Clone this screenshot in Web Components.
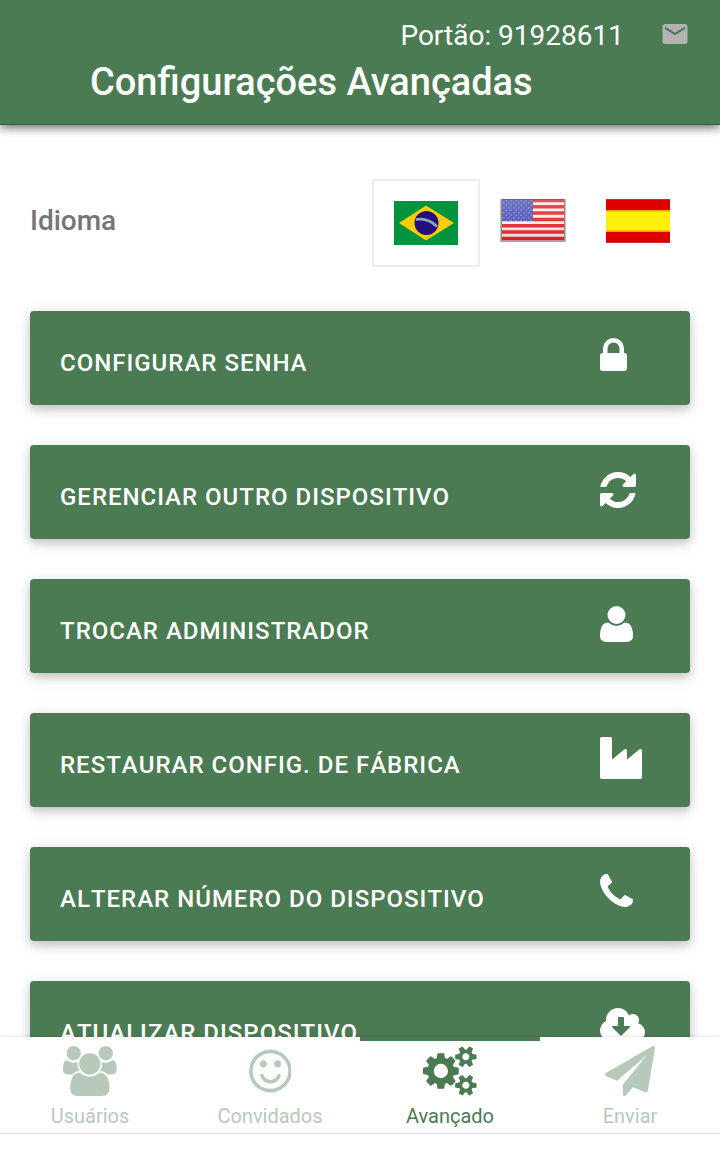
<!DOCTYPE html>
<html lang="pt-BR">
<head>
<meta charset="utf-8">
<meta name="viewport" content="width=device-width, initial-scale=1">
<title>Configurações Avançadas</title>
<style>
  :root { --green: #4a7b52; --muted: #b7caba; --grey: #757575; }
  body { margin: 0; background: #fff; font-family: Roboto, "Liberation Sans", sans-serif; }
</style>
</head>
<body>
<settings-app></settings-app>

<template id="flag-br">
  <svg width="64" height="44" viewBox="0 0 64 44" aria-hidden="true">
    <rect width="64" height="44" fill="#00943f"/>
    <path d="M5 22 32 4.500 60 22 32 39.500Z" fill="#fc0"/>
    <circle cx="32.500" cy="22" r="12" fill="#23107a"/>
    <path d="M22 18.500Q34 16.500 43 25.500" fill="none" stroke="#8fa5c4" stroke-width="2.600"/>
  </svg>
</template>
<template id="flag-us">
  <svg width="66" height="44" viewBox="0 0 66 44" aria-hidden="true">
    <defs>
      <pattern id="stars" width="5" height="5" patternUnits="userSpaceOnUse">
        <rect width="5" height="5" fill="#4b50b5"/>
        <circle cx="1.250" cy="1.250" r=".9" fill="#8084d0"/><circle cx="3.750" cy="3.750" r=".9" fill="#8084d0"/>
      </pattern>
      <linearGradient id="gloss" x2="0" y2="1">
        <stop offset="0" stop-color="#fff" stop-opacity=".2"/>
        <stop offset=".5" stop-color="#fff" stop-opacity=".08"/>
        <stop offset="1" stop-color="#400" stop-opacity=".12"/>
      </linearGradient>
      <filter id="soft"><feGaussianBlur stdDeviation=".6"/></filter>
    </defs>
    <g filter="url(#soft)">
      <rect x="0" y="0" width="66" height="43" rx="1" fill="#c4bdbd"/>
      <rect x="2" y="0" width="62" height="42" fill="#f8eeee"/>
      <path d="M2 1.500h62M2 7.800h62M2 14h62M2 20.500h62M2 26.800h62M2 33h62M2 39.500h62" stroke="#e2262a" stroke-width="3.400"/>
      <rect x="2" y="1" width="31" height="21" fill="url(#stars)"/>
      <rect x="1.500" y=".5" width="63" height="41.500" fill="url(#gloss)" stroke="#8a5a60" stroke-opacity=".55"/>
    </g>
  </svg>
</template>
<template id="flag-es">
  <svg width="64" height="44" viewBox="0 0 64 44" aria-hidden="true">
    <rect width="64" height="44" fill="#de0000"/>
    <rect y="11" width="64" height="22" fill="#f0a000"/>
    <rect y="12.500" width="64" height="19" fill="#fff00a"/>
    <path d="M0 .5h64M0 43.500h64" stroke="#c83030"/>
  </svg>
</template>

<script>
/* Glyph outlines, on a 1792-unit em with the y axis pointing up. */
const smallCog = top => `M1920 ${top}v-140q0 -16 -149 -31q-12 -27 -30 -52q51 -113 51 -138q0 -4 -4 -7q-122 -71 -124 -71q-8 0 -46 47t-52 68q-20 -2 -30 -2t-30 2q-14 -21 -52 -68t-46 -47q-2 0 -124 71q-4 3 -4 7q0 25 51 138q-18 25 -30 52q-149 15 -149 31v140q0 16 149 31q13 29 30 52q-51 113 -51 138q0 4 4 7q4 2 35 20t59 34t30 16q8 0 46 -46.5t52 -67.5q20 2 30 2t30 -2q51 71 92 112l6 2q4 0 124 -70q4 -3 4 -7q0 -25 -51 -138q17 -23 30 -52q149 -15 149 -31z`;
const ICONS = {
  lock: [1152, 'M320 768h512v192q0 106 -75 181t-181 75t-181 -75t-75 -181v-192zM1152 672v-576q0 -40 -28 -68t-68 -28h-960q-40 0 -68 28t-28 68v576q0 40 28 68t68 28h32v192q0 184 132 316t316 132t316 -132t132 -316v-192h32q40 0 68 -28t28 -68z'],
  refresh: [1536, 'M1511 480q0 -5 -1 -7q-64 -268 -268 -434.5t-478 -166.5q-146 0 -282.500 55t-243.500 157l-129 -129q-19 -19 -45 -19t-45 19t-19 45v448q0 26 19 45t45 19h448q26 0 45 -19t19 -45t-19 -45l-137 -137q71 -66 161 -102t187 -36q134 0 250 65t186 179q11 17 53 117q8 23 30 23h192q13 0 22.500 -9.500t9.500 -22.500zM1536 1280v-448q0 -26 -19 -45t-45 -19h-448q-26 0 -45 19t-19 45t19 45l138 138q-148 137 -349 137q-134 0 -250 -65t-186 -179q-11 -17 -53 -117q-8 -23 -30 -23h-199q-13 0 -22.500 9.500t-9.500 22.500v7q65 268 270 434.500t480 166.500q146 0 284 -55.500t245 -156.500l130 129q19 19 45 19t45 -19t19 -45z'],
  user: [1408, 'M1408 131q0 -120 -73 -189.500t-194 -69.500h-874q-121 0 -194 69.500t-73 189.500q0 53 3.500 103.500t14 109t26.500 108.500t43 97.500t62 81t85.500 53.500t111.500 20q9 0 42 -21.500t74.500 -48t108 -48t133.500 -21.500t133.500 21.500t108 48t74.500 48t42 21.500q61 0 111.500 -20t85.500 -53.500t62 -81t43 -97.500t26.500 -108.500t14 -109t3.500 -103.500zM1088 1024q0 -159 -112.500 -271.500t-271.500 -112.500t-271.500 112.500t-112.500 271.500t112.500 271.500t271.500 112.500t271.500 -112.500t112.500 -271.500z'],
  industry: [1792, 'M448 1536q26 0 45 -19t19 -45v-891l536 429q17 14 40 14q26 0 45 -19t19 -45v-379l536 429q17 14 40 14q26 0 45 -19t19 -45v-1152q0 -26 -19 -45t-45 -19h-1664q-26 0 -45 19t-19 45v1664q0 26 19 45t45 19h384z'],
  phone: [1408, 'M1408 296q0 -27 -10 -70.500t-21 -68.500q-21 -50 -122 -106q-94 -51 -186 -51q-27 0 -53 3.500t-57.500 12.500t-47 14.500t-55.500 20.500t-49 18q-98 35 -175 83q-127 79 -264 216t-216 264q-48 77 -83 175q-3 9 -18 49t-20.500 55.500t-14.500 47t-12.500 57.500t-3.500 53q0 92 51 186q56 101 106 122q25 11 68.500 21t70.500 10q14 0 21 -3q18 -6 53 -76q11 -19 30 -54t35 -63.500t31 -53.500q3 -4 17.500 -25t21.500 -35.500t7 -28.500q0 -20 -28.500 -50t-62 -55t-62 -53t-28.500 -46q0 -9 5 -22.500t8.500 -20.500t14 -24t11.500 -19q76 -137 174 -235t235 -174q2 -1 19 -11.500t24 -14t20.500 -8.500t22.500 -5q18 0 46 28.500t53 62t55 62t50 28.500q14 0 28.500 -7t35.500 -21.500t25 -17.500q25 -15 53.500 -31t63.500 -35t54 -30q70 -35 76 -53q3 -7 3 -21z'],
  download: [1920, 'M1280 608q0 14 -9 23t-23 9h-224v352q0 13 -9.500 22.500t-22.500 9.500h-192q-13 0 -22.500 -9.500t-9.500 -22.500v-352h-224q-13 0 -22.500 -9.500t-9.500 -22.500q0 -14 9 -23l352 -352q9 -9 23 -9t23 9l351 351q10 12 10 24zM1920 384q0 -159 -112.500 -271.500t-271.500 -112.500h-1088q-185 0 -316.500 131.500t-131.500 316.500q0 130 70 240t188 165q-2 30 -2 43q0 212 150 362t362 150q156 0 285.500 -87t188.500 -231q71 62 166 62q106 0 181 -75t75 -181q0 -76 -41 -138q130 -31 213.500 -135.500t83.500 -238.500z'],
  users: [1920, 'M593 640q-162 -5 -265 -128h-134q-82 0 -138 40.500t-56 118.500q0 353 124 353q6 0 43.500 -21t97.500 -42.500t119 -21.500q67 0 133 23q-5 -37 -5 -66q0 -139 81 -256zM1664 3q0 -120 -73 -189.500t-194 -69.500h-874q-121 0 -194 69.500t-73 189.500q0 53 3.500 103.500t14 109t26.500 108.500t43 97.500t62 81t85.500 53.500t111.500 20q10 0 43 -21.500t73 -48t107 -48t135 -21.500t135 21.500t107 48t73 48t43 21.500q61 0 111.500 -20t85.500 -53.500t62 -81t43 -97.500t26.500 -108.500t14 -109t3.500 -103.500zM640 1280q0 -106 -75 -181t-181 -75t-181 75t-75 181t75 181t181 75t181 -75t75 -181zM1344 896q0 -159 -112.500 -271.500t-271.500 -112.500t-271.500 112.500t-112.500 271.500t112.500 271.500t271.500 112.500t271.500 -112.500t112.500 -271.500zM1920 671q0 -78 -56 -118.500t-138 -40.500h-134q-103 123 -265 128q81 117 81 256q0 29 -5 66q66 -23 133 -23q59 0 119 21.500t97.500 42.500t43.500 21q124 0 124 -353zM1792 1280q0 -106 -75 -181t-181 -75t-181 75t-75 181t75 181t181 75t181 -75t75 -181z'],
  smile: [1536, 'M1134 461q-37 -121 -138 -195t-228 -74t-228 74t-138 195q-8 25 4 48.500t38 31.500q25 8 48.500 -4t31.500 -38q25 -80 92.500 -129.500t151.500 -49.500t151.500 49.500t92.500 129.500q8 26 32 38t49 4t37 -31.500t4 -48.500zM640 896q0 -53 -37.500 -90.500t-90.500 -37.500t-90.500 37.500t-37.500 90.500t37.500 90.500t90.500 37.500t90.500 -37.500t37.500 -90.500zM1152 896q0 -53 -37.500 -90.500t-90.500 -37.500t-90.500 37.500t-37.500 90.500t37.500 90.500t90.500 37.500t90.500 -37.500t37.500 -90.500zM1408 640q0 130 -51 248.500t-136.500 204t-204 136.500t-248.500 51t-248.500 -51t-204 -136.500t-136.500 -204t-51 -248.500t51 -248.500t136.500 -204t204 -136.500t248.500 -51t248.500 51t204 136.500t136.500 204t51 248.500zM1536 640q0 -209 -103 -385.500t-279.500 -279.500t-385.500 -103t-385.500 103t-279.500 279.500t-103 385.500t103 385.500t279.500 279.500t385.500 103t385.500 -103t279.500 -279.500t103 -385.500z'],
  cogs: [1920, 'M896 640q0 106 -75 181t-181 75t-181 -75t-75 -181t75 -181t181 -75t181 75t75 181zM1664 128q0 52 -38 90t-90 38t-90 -38t-38 -90q0 -53 37.500 -90.500t90.500 -37.500t90.500 37.500t37.500 90.500zM1664 1152q0 52 -38 90t-90 38t-90 -38t-38 -90q0 -53 37.500 -90.500t90.500 -37.500t90.500 37.500t37.500 90.500zM1280 731v-185q0 -10 -7 -19.500t-16 -10.500l-155 -24q-11 -35 -32 -76q34 -48 90 -115q7 -11 7 -20q0 -12 -7 -19q-23 -30 -82.500 -89.500t-78.500 -59.500q-11 0 -21 7l-115 90q-37 -19 -77 -31q-11 -108 -23 -155q-7 -24 -30 -24h-186q-11 0 -20 7.500t-10 17.500l-23 153q-34 10 -75 31l-118 -89q-7 -7 -20 -7q-11 0 -21 8q-144 133 -144 160q0 9 7 19q10 14 41 53t47 61q-23 44 -35 82l-152 24q-10 1 -17 9.500t-7 19.500v185q0 10 7 19.500t16 10.500l155 24q11 35 32 76q-34 48 -90 115q-7 11 -7 20q0 12 7 20q22 30 82 89t79 59q11 0 21 -7l115 -90q34 18 77 32q11 108 23 154q7 24 30 24h186q11 0 20 -7.500t10 -17.500l23 -153q34 -10 75 -31l118 89q8 7 20 7q11 0 21 -8q144 -133 144 -160q0 -8 -7 -19q-12 -16 -42 -54t-45 -60q23 -48 34 -82l152 -23q10 -2 17 -10.500t7 -19.500z' + smallCog(198) + smallCog(1222)],
  plane: [1792, 'M1764 1525q33 -24 27 -64l-256 -1536q-5 -29 -32 -45q-14 -8 -31 -8q-11 0 -24 5l-453 185l-242 -295q-18 -23 -49 -23q-13 0 -22 4q-19 7 -30.500 23.500t-11.500 36.500v349l864 1059l-1069 -925l-395 162q-37 14 -40 55q-2 40 32 59l1664 960q15 9 32 9q20 0 36 -11z']
};

function define(name, html, setup) {
  customElements.define(name, class extends HTMLElement {
    connectedCallback() {
      if (this.shadowRoot) return;
      const root = this.attachShadow({ mode: 'open' });
      root.innerHTML = html;
      if (setup) setup(this, root);
    }
  });
}

function makeIcon(name) {
  const icon = document.createElement('glyph-icon');
  icon.setAttribute('name', name);
  return icon;
}

define('glyph-icon', `
  <style>
    :host { display: block; height: 42px; }
    svg { display: block; height: 100%; margin: 0 auto; fill: currentColor; }
  </style>
  <svg aria-hidden="true"><g transform="matrix(1 0 0 -1 0 1536)"><path fill-rule="evenodd"/></g></svg>`,
  (host, root) => {
    const [width, d] = ICONS[host.getAttribute('name')];
    root.querySelector('svg').setAttribute('viewBox', `0 0 ${width} 1792`);
    root.querySelector('path').setAttribute('d', d);
  });

define('app-header', `
  <style>
    :host { display: block; position: relative; z-index: 1; background: var(--green); color: #fff;
            padding: 16px 30px 22px; border-bottom: 1px solid #33603b; box-shadow: 0 2px 10px rgba(0,0,0,.65); }
    .device { display: flex; justify-content: flex-end; align-items: flex-start; gap: 36px; font-size: 28px; line-height: 40px; }
    button { display: block; border: 0; padding: 3px 0; background: none; color: #b3b3b3; }
    svg { display: block; fill: currentColor; }
    h1 { margin: 6px 0 0 60px; font-size: 38px; line-height: 40px; font-weight: 500; }
  </style>
  <div class="device">
    <slot name="device"></slot>
    <button type="button" aria-label="Mensagens">
      <svg width="30" height="30" viewBox="0 0 24 24" aria-hidden="true"><path d="M20 4H4c-1.100 0-1.990.9-1.990 2L2 18c0 1.100.9 2 2 2h16c1.100 0 2-.9 2-2V6c0-1.100-.9-2-2-2zm0 4l-8 5-8-5V6l8 5 8-5v2z"/></svg>
    </button>
  </div>
  <h1><slot></slot></h1>`);

define('flag-button', `
  <style>
    :host { display: block; }
    button { display: block; border: 0; padding: 20px; background: none; }
    button[aria-pressed="true"] { border: 2px solid #ededed; }
    svg { display: block; }
  </style>
  <button type="button"></button>`,
  (host, root) => {
    const button = root.querySelector('button');
    button.setAttribute('aria-label', host.getAttribute('label'));
    button.setAttribute('aria-pressed', host.hasAttribute('selected'));
    button.append(document.getElementById('flag-' + host.getAttribute('flag')).content.cloneNode(true));
  });

define('language-picker', `
  <style>
    :host { display: flex; justify-content: space-between; align-items: flex-start; }
    h2 { margin: 0; padding: 26px 0; font-size: 28px; line-height: 32px; font-weight: 500; color: var(--grey); }
    div { display: flex; align-items: flex-start; }
  </style>
  <h2 id="label"><slot></slot></h2>
  <div role="group" aria-labelledby="label">
    <flag-button flag="br" label="Português" selected></flag-button>
    <flag-button flag="us" label="English"></flag-button>
    <flag-button flag="es" label="Español"></flag-button>
  </div>`);

define('action-button', `
  <style>
    :host { display: block; }
    button { display: grid; grid-template-columns: 1fr 60px; align-items: end; width: 100%; border: 0; border-radius: 4px;
             padding: 24px 30px 28px; background: var(--green); color: #fff; text-align: left; text-transform: uppercase;
             font: 500 24px/28px Roboto, "Liberation Sans", sans-serif; font-kerning: none; letter-spacing: 1px;
             box-shadow: 0 4px 10px rgba(0,0,0,.2), 0 4px 20px rgba(0,0,0,.08); }
    glyph-icon { justify-self: start; }
  </style>
  <button type="button"><span><slot></slot></span></button>`,
  (host, root) => root.querySelector('button').append(makeIcon(host.getAttribute('icon'))));

define('tab-link', `
  <style>
    :host { display: block; flex: 1; min-width: 0; }
    a { display: block; padding: 5px 0; border-top: 4px solid #fff; color: var(--muted); text-align: center;
        text-decoration: none; font-size: 20px; line-height: 24px; }
    a[aria-current] { color: var(--green); border-color: var(--green); }
    .icon { height: 50px; margin-bottom: 8px; }
    glyph-icon { height: 100%; }
  </style>
  <a href="#"><div class="icon"></div><slot></slot></a>`,
  (host, root) => {
    root.querySelector('.icon').append(makeIcon(host.getAttribute('icon')));
    if (host.hasAttribute('current')) root.querySelector('a').setAttribute('aria-current', 'page');
  });

define('tab-bar', `
  <style>
    :host { display: block; position: relative; background: #fff; padding-bottom: 16px; box-shadow: 0 0 4px rgba(0,0,0,.15); }
    nav { display: flex; border-bottom: 1px solid #e0e0e0; }
  </style>
  <nav><slot></slot></nav>`);

define('settings-app', `
  <style>
    :host { display: flex; flex-direction: column; height: 100vh; }
    main { flex: 1; min-height: 0; overflow-y: auto; scrollbar-width: none; padding: 54px 30px 40px; box-sizing: border-box; }
    .actions { display: grid; gap: 40px; margin-top: 44px; }
  </style>
  <app-header><span slot="device">Portão: 91928611</span>Configurações Avançadas</app-header>
  <main>
    <language-picker>Idioma</language-picker>
    <div class="actions">
      <action-button icon="lock">Configurar senha</action-button>
      <action-button icon="refresh">Gerenciar outro dispositivo</action-button>
      <action-button icon="user">Trocar administrador</action-button>
      <action-button icon="industry">Restaurar config. de fábrica</action-button>
      <action-button icon="phone">Alterar número do dispositivo</action-button>
      <action-button icon="download">Atualizar dispositivo</action-button>
    </div>
  </main>
  <tab-bar>
    <tab-link icon="users">Usuários</tab-link>
    <tab-link icon="smile">Convidados</tab-link>
    <tab-link icon="cogs" current>Avançado</tab-link>
    <tab-link icon="plane">Enviar</tab-link>
  </tab-bar>`);
</script>
</body>
</html>
